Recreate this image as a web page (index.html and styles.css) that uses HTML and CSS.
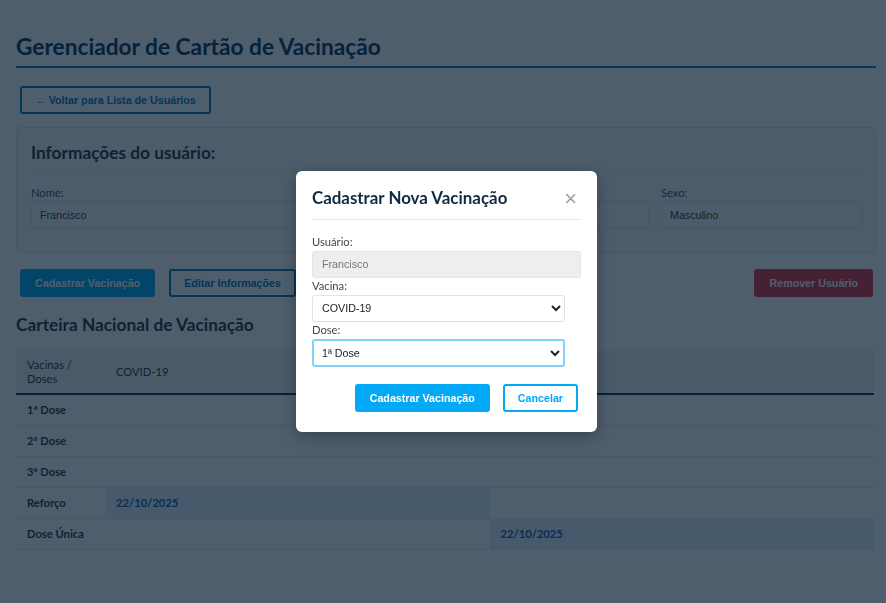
FILE: index.html
```html
<!DOCTYPE html>
<html lang="pt-BR">
<head>
<meta charset="utf-8">
<title>Gerenciador de Cartão de Vacinação</title>
<link rel="stylesheet" href="styles.css">
</head>
<body>
<div class="app">
  <h1 class="page-title">Gerenciador de Cartão de Vacinação</h1>
  <button class="btn btn-outline btn-back">← Voltar para Lista de Usuários</button>

  <section class="user-card">
    <h2 class="user-card-title">Informações do usuário:</h2>
    <div class="user-grid">
      <div class="field">
        <label class="field-label">Nome:</label>
        <input class="field-input" value="Francisco" readonly>
      </div>
      <div class="field">
        <label class="field-label">&nbsp;</label>
        <input class="field-input" value="" readonly>
      </div>
      <div class="field">
        <label class="field-label">Sexo:</label>
        <input class="field-input" value="Masculino" readonly>
      </div>
    </div>
  </section>

  <div class="actions">
    <div class="actions-left">
      <button class="btn btn-primary">Cadastrar Vacinação</button>
      <button class="btn btn-outline">Editar Informações</button>
    </div>
    <button class="btn btn-danger">Remover Usuário</button>
  </div>

  <h2 class="section-title">Carteira Nacional de Vacinação</h2>
  <table class="vac-table">
    <colgroup><col class="col-label"><col><col></colgroup>
    <thead>
      <tr><th>Vacinas / Doses</th><th>COVID-19</th><th></th></tr>
    </thead>
    <tbody>
      <tr><td class="row-label">1ª Dose</td><td></td><td></td></tr>
      <tr><td class="row-label">2ª Dose</td><td></td><td></td></tr>
      <tr><td class="row-label">3ª Dose</td><td></td><td></td></tr>
      <tr><td class="row-label">Reforço</td><td class="applied">22/10/2025</td><td></td></tr>
      <tr><td class="row-label">Dose Única</td><td></td><td class="applied">22/10/2025</td></tr>
    </tbody>
  </table>
</div>

<div class="overlay">
  <div class="modal">
    <div class="modal-header">
      <h3 class="modal-title">Cadastrar Nova Vacinação</h3>
      <span class="modal-close">×</span>
    </div>
    <div class="modal-body">
      <div class="form-group">
        <label class="form-label">Usuário:</label>
        <input class="form-input" value="Francisco" disabled>
      </div>
      <div class="form-group">
        <label class="form-label">Vacina:</label>
        <select class="form-select">
          <option>COVID-19</option>
        </select>
      </div>
      <div class="form-group">
        <label class="form-label">Dose:</label>
        <select class="form-select is-focused">
          <option>1ª Dose</option>
          <option>2ª Dose</option>
          <option>3ª Dose</option>
          <option>Reforço</option>
          <option>Dose Única</option>
        </select>
      </div>
    </div>
    <div class="modal-footer">
      <button class="btn btn-primary">Cadastrar Vacinação</button>
      <button class="btn btn-cancel">Cancelar</button>
    </div>
  </div>
</div>
</body>
</html>
```

FILE: styles.css
```css
* { box-sizing: border-box; }

html, body {
  margin: 0;
  padding: 0;
  background: #ffffff;
  font-family: "Segoe UI", Lato, "Noto Sans", sans-serif;
  color: #333;
}

.app {
  padding: 33px 10px 40px 16px;
}

.page-title {
  margin: 0;
  font-size: 22.7px;
  line-height: 27px;
  font-weight: 700;
  color: #07335a;
  padding-bottom: 6px;
  border-bottom: 2px solid #0288d1;
}

.btn {
  font-family: "Liberation Sans", Arial, sans-serif;
  font-size: 10.7px;
  font-weight: 700;
  height: 28px;
  padding: 0 13px;
  border-radius: 3px;
  border: 2px solid transparent;
  cursor: pointer;
}

.btn-outline {
  background: transparent;
  color: #0277bd;
  border-color: #0277bd;
}

.btn-primary {
  background: #03a9f4;
  color: #fff;
  border-color: #03a9f4;
}

.btn-danger {
  background: #dc3545;
  color: #fff;
  border-color: #dc3545;
}

.btn-cancel {
  background: #fff;
  color: #03a9f4;
  border-color: #03a9f4;
}

.btn-back {
  display: block;
  margin: 18px 0 0 4px;
}

.user-card {
  margin-top: 13px;
  background: #f5f7f9;
  border: 1px solid #e4e7ea;
  border-radius: 4px;
  padding: 14.5px 12px 23.5px 14px;
}

.user-card-title {
  margin: 0;
  font-size: 17.3px;
  line-height: 20.5px;
  font-weight: 700;
  color: #333;
  padding-bottom: 7.5px;
  border-bottom: 1px solid #e3e6e9;
}

.user-grid {
  display: grid;
  grid-template-columns: 2fr 1fr 1fr;
  gap: 12px;
  margin-top: 14px;
}

.field-label {
  display: block;
  font-size: 11.2px;
  line-height: 14px;
  color: #4a4a4a;
  margin-bottom: 1px;
}

.field-input {
  display: block;
  width: 100%;
  height: 28px;
  padding: 0 8px;
  font-family: "Liberation Sans", Arial, sans-serif;
  font-size: 10.7px;
  color: #333;
  background: #f8f9fa;
  border: 1px solid #e2e5e8;
  border-radius: 3px;
}

.actions {
  display: flex;
  justify-content: space-between;
  align-items: center;
  margin-top: 16px;
  padding: 0 3px 0 4px;
}

.actions-left {
  display: flex;
  gap: 14px;
}

.section-title {
  margin: 18px 0 0;
  font-size: 17.3px;
  line-height: 20.5px;
  font-weight: 700;
  color: #333;
}

.vac-table {
  margin-top: 14px;
  width: calc(100% - 2px);
  border-collapse: collapse;
  table-layout: fixed;
  font-size: 11.2px;
}

.col-label { width: 89px; }

.vac-table th {
  text-align: left;
  font-weight: 400;
  background: #eef1f4;
  line-height: 14px;
  padding: 8px 11px 7px;
  border-bottom: 2px solid #07335a;
  color: #333;
}

.vac-table td {
  line-height: 14px;
  padding: 8px 11px;
  border-bottom: 1px solid #e6e9ec;
  height: 31px;
}

.row-label {
  font-weight: 700;
  color: #333;
}

.applied {
  background: #e3f2fd;
  color: #0f5aa8;
  font-weight: 700;
}

.overlay {
  position: fixed;
  inset: 0;
  background: rgba(4, 26, 45, 0.7);
  display: flex;
  align-items: center;
  justify-content: center;
  padding-left: 7px;
}

.modal {
  width: 301px;
  background: #fff;
  border-radius: 6px;
  padding: 17px 16px 20px;
  box-shadow: 0 4px 16px rgba(0, 0, 0, 0.3);
}

.modal-header {
  display: flex;
  justify-content: space-between;
  align-items: flex-start;
  padding-bottom: 9px;
  border-bottom: 1px solid #e6e6e6;
}

.modal-title {
  margin: 0;
  font-size: 16.9px;
  line-height: 20px;
  font-weight: 700;
  color: #102a43;
}

.modal-close {
  font-family: "Liberation Sans", Arial, sans-serif;
  font-size: 22px;
  line-height: 22px;
  color: #a0a0a0;
  margin-right: 4px;
}

.modal-body {
  margin-top: 15px;
}

.form-group {
  margin-bottom: 1.5px;
}

.form-label {
  display: block;
  font-size: 11.2px;
  line-height: 14px;
  color: #444;
  margin-bottom: 1.5px;
}

.form-input {
  display: block;
  width: 100%;
  height: 27px;
  padding: 0 9px;
  font-family: "Liberation Sans", Arial, sans-serif;
  font-size: 10.7px;
  color: #777;
  background: #eee;
  border: 1px solid #e5e5e5;
  border-radius: 3px;
}

.form-select {
  display: block;
  width: 94%;
  height: 27px;
  padding: 0 5px;
  font-family: "Liberation Sans", Arial, sans-serif;
  font-size: 10.7px;
  color: #222;
  background: #fff;
  border: 1px solid #e2e2e2;
  border-radius: 3px;
}

.form-select.is-focused {
  height: 28px;
  border: 2px solid #7fd3fb;
  padding-left: 4px;
}

.modal-footer {
  display: flex;
  justify-content: flex-end;
  gap: 13px;
  margin-top: 17.5px;
  padding-right: 3px;
}
```
